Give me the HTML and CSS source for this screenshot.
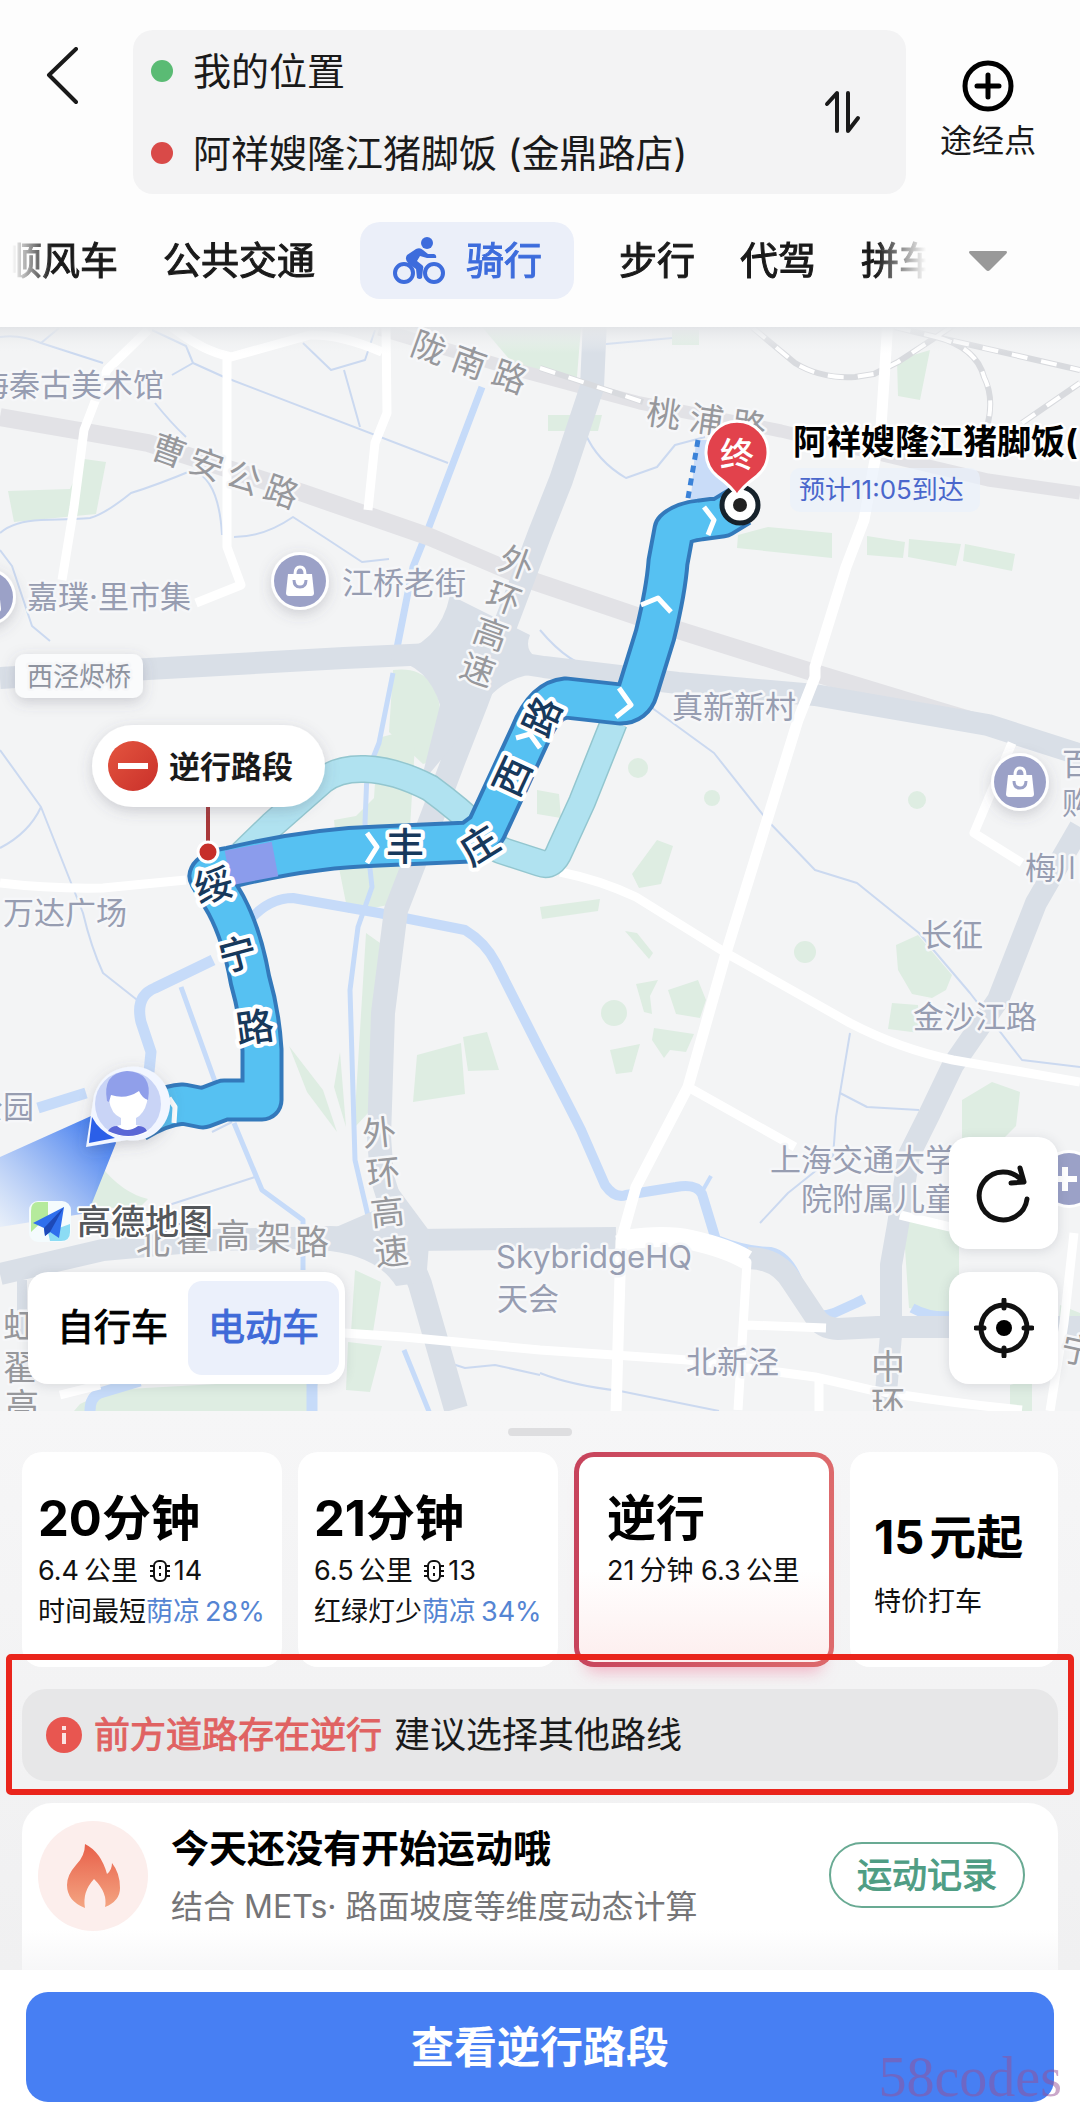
FILE: index.html
```
<!doctype html>
<html lang="zh-CN">
<head>
	<meta charset="utf-8">
	<title>骑行路线</title>
	<meta name="viewport" content="width=device-width, initial-scale=1">
	<link rel="stylesheet" href="styles.css">
</head>
<body>
	<header class="top">
		<div class="search">
			<button class="back" aria-label="返回">
				<svg width="32" height="58" viewBox="0 0 32 58"><path d="M30 2 3 28l27 27" /></svg>
			</button>
			<div class="places">
				<div class="place-list">
					<div class="place"><i class="dot green"></i>我的位置</div>
					<div class="place"><i class="dot red"></i>阿祥嫂隆江猪脚饭 (金鼎路店)</div>
				</div>
				<button class="swap" aria-label="交换起终点">
					<svg width="38" height="44" viewBox="0 0 38 44"><path d="M3 14 13 3v38M24 3v38l10-13" /></svg>
				</button>
			</div>
			<button class="via">
				<svg width="54" height="54" viewBox="0 0 54 54"><circle cx="27" cy="27" r="23" /><path d="M27 16v22M16 27h22" /></svg>
				途经点
			</button>
		</div>
		<div class="tabs">
			<nav class="tab-scroll">
				<a href="#">顺风车</a>
				<a href="#">公共交通</a>
				<a href="#" class="on">
					<svg class="bike" width="54" height="48" viewBox="0 0 54 48">
						<circle class="wheel" cx="12" cy="36" r="9" />
						<circle class="wheel" cx="42" cy="36" r="9" />
						<circle cx="35" cy="6" r="6" />
						<path d="M15 18 24 12q4-2 7 1l5 4h6q3 1 2 4h-9l-7-2-3 5 5 4q2 1 1 4l-1 9q-2 2-5 0l-1-9-7-5q-5-4-2-9z" />
					</svg>
					骑行
				</a>
				<a href="#">步行</a>
				<a href="#">代驾</a>
				<a href="#">拼车</a>
			</nav>
			<button class="more" aria-label="更多">
				<svg width="40" height="22" viewBox="0 0 40 22"><path d="M2 1h36q2 1 0 3L22 20q-2 2-4 0L2 4q-2-2 0-3z" /></svg>
			</button>
		</div>
	</header>

	<main>
		<section class="map">
			<svg class="map-art" viewBox="0 327 1080 1084">
				<defs>
					<linearGradient id="beam" x1="1" y1="0" x2="0" y2="1">
						<stop offset="0.1" stop-color="#3c78ee" />
						<stop offset="1" stop-color="#e3edfb" stop-opacity="0.7" />
					</linearGradient>
					<linearGradient id="noentry" x1="0" y1="0" x2="1" y2="1">
						<stop offset="0" stop-color="#e4553f" />
						<stop offset="1" stop-color="#c9302a" />
					</linearGradient>
					<linearGradient id="shade" x1="0" y1="0" x2="0" y2="1">
						<stop offset="0" stop-color="#e2e4e7" />
						<stop offset="1" stop-color="#f3f4f5" stop-opacity="0" />
					</linearGradient>
					<filter id="soft" x="-20%" y="-30%" width="140%" height="180%">
						<feDropShadow dx="0" dy="4" stdDeviation="7" flood-color="#556" flood-opacity="0.25" />
					</filter>
					<g id="bag">
						<circle r="29" fill="#fff" filter="url(#soft)" />
						<circle r="26" fill="#9ba1c7" />
						<path d="M-12-7h24l2 19q0 3-3 3h-22q-3 0-3-3z" fill="#fff" />
						<path d="M-5-7q0-7 5-7t5 7" fill="none" stroke="#fff" stroke-width="3" />
						<path d="M-6-1q0 7 6 7t6-7" fill="none" stroke="#9ba1c7" stroke-width="3" />
					</g>
				</defs>
				<rect y="327" width="1080" height="1084" fill="#f3f4f5" />

				<!-- parks -->
				<g class="park">
					<path d="M8 491l62-2 14-30 22 3-10 52-82 8z" />
					<path d="M393 670q46-6 48 50 0 40-18 44l-34-32z" />
					<path d="M482 327h99l-5 62-60-22z" />
					<path d="M672 330h27v15h-27zM548 415h54l-4 16h-50z" />
					<path d="M897 360l33-10-10 50-22-4zM738 535l30-8 64 6v25l-95-10zM867 536l38 6-2 16-36-3zM909 539l52 5-5 22-48-9zM965 544l50 10-3 17-49-10z" />
					<path d="M334 820l22-4 18-18 4-60 38-10-6 100-12 75-50 10-10-50zM366 933l14 10-12 170-14 15z" />
					<path d="M417 1055l44-12 4 51-52 8zM463 1037l24-5 12 38-31 1z" />
					<path d="M289 1046l34 44 14 42-30-40zM340 1052l6 75-12-40z" />
					<circle cx="638" cy="768" r="10" /><circle cx="712" cy="798" r="8" /><circle cx="917" cy="800" r="9" />
					<path d="M657 840l16 6-12 38-22 4-7-14zM625 931l12 2 16 20-4 6zM540 907l60-8-2 12-56 8z" />
					<circle cx="614" cy="1013" r="13" /><circle cx="805" cy="952" r="11" />
					<path d="M668 990l30-10 8 20-6 18-24-4zM636 984l22-4-8 16 2 18-8-2zM610 1050l30-6-8 28-16 2zM654 1028l40 6-8 18-16-2-6 8-12-18zM537 790l22 4 2 24-24-4z" />
					<path d="M896 945l22-10 34 40-6 15-14 8-20-4-14-24zM892 1003l26 2 2 28-32-4zM962 1100l30-18 28 10-4 34-18 18h-36z" />
					<path d="M903 1218l56 10v90l-50-10zM1010 1385l22-6v34h-22zM1060 1305l20 8v24l-22-4z" />
					<path d="M100 1165q22 28 48 34l-12 12-46-6zM355 1270l26 12-8 50h-22zM348 1342l34 4-12 46-24-2zM80 1404l30-14 210-12-12 33H74z" />
				</g>

				<!-- water -->
				<g class="brook">
					<path d="M0 337q20-3 41 6l62 20M59 328l-18 15M152 330l34 16 7 17 31 14 224 86M172 375l21-12M155 403q16 20 31 34M0 533q14-12 41-13 40-1 49-2 15-4 41-25 26-8 62-23 26 10 29 65M234 537q30 0 59-20l34 22 35 23 27-3M303 343l28 27 34-10 10-30M344 370l16 57M0 550l12 16 20 60 18 15" />
					<path d="M585 433q12 28 41 45l31-11 18-22 30-8M606 344l66-6M540 630q30 36 60 40l114 83 53 67 48 50 42 13 62 50 51 60 52 67 58 7" />
					<path d="M850 1033l-14 84-3 40-45 36-28 30M840 1093l27 14 52 3M0 750l41 57 42 106q8 34 20 60l38 30M41 807q-12 26-41 41M255 1177l-86 28M232 1122l-20 10M540 1373q30 12 80 18l99 20M440 1360l25 8 30-3 45 10" />
				</g>
				<g class="river">
					<path d="M482 387l-55 145-14 35-17 86" stroke-width="7" />
					<path d="M393 673l-14 70-12 30-2 50 7 64-14 40-8 63 5 170 14 60" stroke-width="5" />
					<path d="M181 987l36 100M234 1123l28 67 41 30v50M404 1350l26 64" stroke-width="5" />
					<path d="M248 922q20-24 45-24l86 15 86 17q20 12 31 33l44 87q26 50 41 80l24 55q10 14 21 10l50-8q20-4 26 7l14 46q30 12 55 12 24 6 34 53 6 16 29 8l22-10 8-4M912 1308q18 10 40 8" stroke-width="10" />
					<path d="M213 960l-58 28q-20 8-14 34l10 30-2 20M86 1093l-48 15M90 1411q0-14 10-18l40-12M312 1380v31" stroke-width="11" />
					<path d="M703 1190l8-14" stroke-width="4" />
				</g>

				<!-- arterial roads -->
				<g class="arterial">
					<path d="M379 329l120 36 141 38 141 28 207 49 92 13" stroke-width="13" />
					<path d="M0 417l86 15 62 11 155 50 127 44 106 45 142 48 137 43 125 38 140 42" stroke-width="18" />
				</g>
				<g class="ring">
					<path d="M595 320l-3 67-31 93-21 53-34 90-30 80-22 56-22 58-36 93-13 103-4 124 3 40 18 57 20 50 36 125" stroke-width="24" />
					<path d="M0 678l148-9 196-11 110-5 90 14 134 16 137 12 173 30 100 32" stroke-width="22" />
					<path d="M390 655q50-10 60-60l80 40q-10 24 30 30v10q-60-10-90 50l-50 60 20-80q-12-40-50-46z" class="junction" />
					<path d="M1080 827l-44 76-38 97-45 65-24 50-20 40-11 70-7 40v70l-7 80" stroke-width="22" />
					<path d="M0 1274l103-24 110-10 117-3 83 3 203-2M748 1258q30 0 44 24l24 36q6 10 22 11l40-2h220" stroke-width="22" />
					<path d="M320 1234l60-26 10-30 40 54-4 50-30 4q-20-32-76-36z" class="junction" />
					<path d="M22 1280v60" stroke-width="10" />
				</g>

				<!-- rail -->
				<path class="rail-bed" d="M753 328l42 35q26 16 60 14l19-3 24-12 38-25 24-16M895 327l41 10 144 33M936 337q40 10 48 40 10 20 4 46M1022 423l58-40M540 368l103 34" />
				<path class="rail" d="M753 328l42 35q26 16 60 14l19-3 24-12 38-25 24-16M895 327l41 10 144 33M936 337q40 10 48 40 10 20 4 46M1022 423l58-40M540 368l103 34" />

				<!-- streets -->
				<g class="street">
					<path d="M148 330l-41 40-23 60-10 77-12 73M172 327q30 24 59 30l79-22q30-1 72 17M227 357v190l14 38-45 18M386 327l1 86-12 30-7 67" />
					<path d="M888 320l-7 107-17 93-18 47-31 100v10l-17 43-72 233-38 134-52 100-15 54-5 173" stroke-width="11" />
					<path d="M560 872q40 8 76 25l90 56 124 70q50 26 103 37l127 22M688 1087l107 60M0 883q50 6 103 5l83-8M1012 743l-38 90 48 30" />
					<path d="M616 1240q50-8 70-2 40 8 61 24l-9 148M747 1325l79 3M344 1333l60 4 136 13 148 10 127 17 56 13q70 12 151 20M819 1380v31M1074 1233l-10 90-14 88M900 1215l50 12M60 1395l40-10" />
					<path d="M625 1240q40-6 66 0 36 8 56 20" stroke-width="20" />
				</g>
				<rect y="327" width="1080" height="26" fill="url(#shade)" />

				<!-- place labels -->
				<g class="label">
					<text x="-22" y="396">海秦古美术馆</text>
					<text x="27" y="608">嘉璞·里市集</text>
					<text x="342" y="594">江桥老街</text>
					<text x="672" y="718">真新新村</text>
					<text x="3" y="924">万达广场</text>
					<text x="-28" y="1118">公园</text>
					<text x="921" y="946">长征</text>
					<text x="913" y="1028">金沙江路</text>
					<text x="1025" y="879">梅川路</text>
					<text x="1062" y="775">百联</text>
					<text x="1062" y="814">购物</text>
					<text x="770" y="1171">上海交通大学</text>
					<text x="801" y="1210">院附属儿童</text>
					<text x="496" y="1268">SkybridgeHQ</text>
					<text x="497" y="1310">天会</text>
					<text x="686" y="1373">北新泾</text>
				</g>
				<rect x="15" y="654" width="128" height="44" rx="10" fill="#fafbfc" filter="url(#soft)" />
				<text x="27" y="686" class="bridge">西泾烬桥</text>
				<g class="road-name">
					<text transform="translate(429 347) rotate(20)" x="0 43 86" y="13">陇南路</text>
					<text transform="translate(169 450) rotate(20)" x="0 40 80 120" y="13">曹安公路</text>
					<text transform="translate(664 413) rotate(8)" x="0 43 86" y="13">桃浦路</text>
					<text transform="translate(517 562) rotate(20)" x="0 0 0 0" y="13 51 89 127">外环高速</text>
					<text transform="translate(379 1132) rotate(-6)" x="0 0 0 0" y="13 53 93 133">外环高速</text>
					<text x="153 193 233 274 312" y="1254 1251 1248 1250 1254">北翟高架路</text>
					<text x="888 888" y="1379 1416">中环</text>
					<text x="20 20 22" y="1338 1380 1418">虹翟高</text>
					<text transform="translate(1078 1350) rotate(12)" y="13">宁</text>
				</g>
				<use href="#bag" x="300" y="581" />
				<use href="#bag" x="1020" y="782" />
				<use href="#bag" x="-13" y="597" />
				<circle cx="1069" cy="1179" r="29" fill="#fff" />
				<circle cx="1069" cy="1179" r="26" fill="#9ba1c7" />
				<path d="M1065 1167v24M1055 1179h22" stroke="#fff" stroke-width="6" />

				<!-- other route, then the selected one -->
				<path class="alt-edge" d="M242 854L272 825 322 781Q338 768 365 769 Q395 770 430 788Q460 810 480 830L500 850 540 863Q553 868 560 850L582 802 614 722" />
				<path class="alt" d="M242 854L272 825 322 781Q338 768 365 769 Q395 770 430 788Q460 810 480 830L500 850 540 863Q553 868 560 850L582 802 614 722" />
				<path d="M696 440l30 0 14 50-50 18z" fill="#c9dcf8" />
				<path class="route-edge" d="M135 1122Q160 1106 183 1104L203 1108 224 1100H262V1050Q260 1015 250 980 242 935 226 905L209 876Q212 870 231 867 310 848 379 846L470 842 486 830 530 735Q544 700 566 698L620 704Q634 704 638 690L655 635Q666 590 668 562L674 530Q682 522 700 520L722 517 740 506" />
				<path class="route" d="M135 1122Q160 1106 183 1104L203 1108 224 1100H262V1050Q260 1015 250 980 242 935 226 905L209 876Q212 870 231 867 310 848 379 846L470 842 486 830 530 735Q544 700 566 698L620 704Q634 704 638 690L655 635Q666 590 668 562L674 530Q682 522 700 520L722 517 740 506" />
				<path d="M228 868l47-9" stroke="#8b9cec" stroke-width="35" />
				<path d="M698 440l-11 64" stroke="#3a82d8" stroke-width="5" stroke-dasharray="7 6" />
				<path class="arrows" d="M704 507l10 13-6 15M641 605l17-7 13 14M619 688l12 17-15 12M367 833l10 14-10 16M516 738l14-4 10 14M169 1098l6 9-1 16" />
				<g class="route-name">
					<text transform="translate(214 886) rotate(-15)" y="13">绥</text>
					<text transform="translate(238 955) rotate(-15)" y="13">宁</text>
					<text transform="translate(255 1028) rotate(-8)" y="13">路</text>
					<text transform="translate(405 847)" y="13">丰</text>
					<text transform="translate(480 846) rotate(-32)" y="13">庄</text>
					<text transform="translate(513 777) rotate(-65)" y="13">西</text>
					<text transform="translate(543 717) rotate(-65)" y="13">路</text>
				</g>

				<!-- destination -->
				<circle cx="740" cy="505" r="18" fill="#fff" stroke="#16222b" stroke-width="5" />
				<circle cx="740" cy="505" r="7" fill="#222" />
				<path d="M737 496q-4-8-20-20a31 31 0 1 1 40 0q-16 12-20 20z" fill="#e2424c" stroke="#fff" stroke-width="3" />
				<text x="737" y="467" class="pin-text">终</text>
				<text x="793" y="454" class="dest">阿祥嫂隆江猪脚饭(</text>
				<rect x="790" y="468" width="190" height="44" rx="10" fill="#e9f1fb" opacity="0.7" />
				<text x="799" y="499" class="eta">预计11:05到达</text>

				<!-- current position -->
				<path d="M100 1112 0 1157v70l88-14 28-70z" fill="url(#beam)" />
				<path d="M127 1067a37 37 0 1 1 0 73l-41 7 8-52q8-24 33-28z" fill="#f2f6ff" filter="url(#soft)" />
				<path d="M92 1117l-3 26 26-5q-16-7-23-21z" fill="#2b5fe8" />
				<circle cx="128" cy="1104" r="33" fill="#c9d4f6" />
				<path d="M109 1132q4-6 12-7v-7q-10-4-12-18-6-22 19-25 24 3 19 27-3 12-11 16v7q9 1 12 7-20 10-39 0z" fill="#fff" />
				<path d="M107 1101q-5-28 20-30 26 1 21 29-6-2-9-9-13 9-28 4l-2 7z" fill="#909fea" />
				<path d="M108 1131q3-5 9-5 10 8 21 0 7 0 9 5-18 10-39 0z" fill="#5a67d6" />

				<!-- wrong way callout -->
				<path d="M208 807v38" stroke="#a8383a" stroke-width="4" />
				<circle cx="208" cy="852" r="10" fill="#c62f2a" stroke="#fff" stroke-width="3" />
				<rect x="92" y="725" width="233" height="82" rx="41" fill="#fff" filter="url(#soft)" />
				<circle cx="133" cy="766" r="25" fill="url(#noentry)" />
				<path d="M118 766h30" stroke="#fff" stroke-width="6" />
				<text x="169" y="778" class="callout">逆行路段</text>

				<!-- brand -->
				<rect x="29" y="1201" width="42" height="41" rx="9" fill="#f4fbfd" />
				<path d="M38 1202h10v14l-17 16v-21q0-9 7-9z" fill="#b5ea9c" />
				<path d="M48 1232l22-8v8q0 9-9 9H50z" fill="#8cdcf4" />
				<path d="M33 1223l31-16-5 31-9-6-5 4-1-8z" fill="#2f6fed" />
				<path d="M64 1207l-20 21 1 8 5-4z" fill="#1d49b8" />
				<text x="77" y="1234" class="brand">高德地图</text>
			</svg>
			<div class="map-bar">
				<div class="ride-type">
					<button>自行车</button>
					<button class="on">电动车</button>
				</div>
				<div class="map-tools">
					<button aria-label="刷新">
						<svg width="60" height="60" viewBox="0 0 60 60"><path d="M53 36a24 24 0 1 1-5-18M46 5l4 14-13 1" /></svg>
					</button>
					<button aria-label="定位">
						<svg width="60" height="60" viewBox="0 0 60 60"><circle cx="30" cy="30" r="23" /><circle class="fill" cx="30" cy="30" r="8" /><path d="M30 2v8M30 50v8M2 30h8M50 30h8" /></svg>
					</button>
				</div>
			</div>
		</section>

		<section class="sheet">
			<div class="handle"></div>
			<div class="routes">
				<button class="route-card">
					<b>20分钟</b>
					<span>6.4<i class="thin"></i>公里 <svg class="light" width="22" height="24" viewBox="0 0 22 24"><rect x="5" y="2" width="12" height="20" rx="5" /><path d="M1 7h4M1 12h4M1 17h4M17 7h4M17 12h4M17 17h4M11 7v3M11 14v3" /></svg>14</span>
					<span>时间最短<em>荫凉<i class="thin"></i>28%</em></span>
				</button>
				<button class="route-card">
					<b>21分钟</b>
					<span>6.5<i class="thin"></i>公里 <svg class="light" width="22" height="24" viewBox="0 0 22 24"><rect x="5" y="2" width="12" height="20" rx="5" /><path d="M1 7h4M1 12h4M1 17h4M17 7h4M17 12h4M17 17h4M11 7v3M11 14v3" /></svg>13</span>
					<span>红绿灯少<em>荫凉<i class="thin"></i>34%</em></span>
				</button>
				<button class="route-card picked">
					<b>逆行</b>
					<span>21<i class="thin"></i>分钟 6.3<i class="thin"></i>公里</span>
				</button>
				<button class="route-card taxi">
					<b>15<i class="thin"></i>元起</b>
					<span>特价打车</span>
				</button>
			</div>

			<div class="notice">
				<svg width="36" height="36" viewBox="0 0 36 36"><circle cx="18" cy="18" r="18" fill="#e85650" /><path d="M18 9v4M18 16v11" fill="none" stroke="#fbe3e2" stroke-width="4" /></svg>
				<strong>前方道路存在逆行</strong>
				<span>建议选择其他路线</span>
			</div>

			<div class="sport">
				<div class="flame">
					<svg width="56" height="66" viewBox="0 0 56 66">
						<defs><linearGradient id="fire" x1="0" y1="0" x2="0" y2="1"><stop offset="0" stop-color="#e8604a" /><stop offset="1" stop-color="#f4a582" /></linearGradient></defs>
						<path d="M20 1q16 8 22 30 5-4 5-11 8 10 8 25 0 13-15 19 3-14-11-28-12 13-9 29Q2 58 2 42q0-10 9-20 9-9 9-21z" fill="url(#fire)" />
					</svg>
				</div>
				<div class="sport-text">
					<h2>今天还没有开始运动哦</h2>
					<p>结合 METs· 路面坡度等维度动态计算</p>
				</div>
				<button class="record">运动记录</button>
			</div>
		</section>
	</main>

	<footer class="bottom">
		<button class="primary">查看逆行路段</button>
		<span class="mark">58codes</span>
	</footer>
</body>
</html>
```

FILE: styles.css
```
* {
	box-sizing: border-box;
}

body {
	margin: 0;
	background: #fff;
	color: #1a1a1a;
	font-family: Inter, "Noto Sans CJK SC", sans-serif;
}

button {
	margin: 0;
	padding: 0;
	border: 0;
	background: none;
	color: inherit;
	font: inherit;
	cursor: pointer;
}

a {
	color: inherit;
	text-decoration: none;
}

svg {
	display: block;
}

/* header */
.top {
	padding: 30px 0 28px;
	background: #fdfdfd;
}

.search {
	display: flex;
	align-items: center;
	padding: 0 44px 0 46px;
}

.back {
	margin-bottom: 72px;
}

.back path, .swap path, .via path, .via circle {
	fill: none;
	stroke: #1a1a1a;
	stroke-width: 4;
	stroke-linecap: round;
	stroke-linejoin: round;
}

.places {
	flex: 1;
	display: flex;
	align-items: center;
	justify-content: space-between;
	margin: 0 34px 0 55px;
	padding: 0 44px 0 18px;
	border-radius: 20px;
	background: #f3f3f4;
}

.place {
	display: flex;
	align-items: center;
	gap: 20px;
	height: 82px;
	font-size: 38px;
	line-height: 48px;
}

.dot {
	width: 22px;
	height: 22px;
	border-radius: 50%;
}

.green {
	background: #5abb74;
}

.red {
	background: #d94a48;
}

.via {
	display: flex;
	flex-direction: column;
	align-items: center;
	gap: 8px;
	margin-bottom: 4px;
	font-size: 32px;
	line-height: 40px;
}

.via circle, .via path {
	stroke: #000;
	stroke-width: 5;
}

.tabs {
	display: flex;
	align-items: center;
	margin-top: 28px;
	padding: 0 72px 0 12px;
}

.tab-scroll {
	flex: 1;
	display: flex;
	align-items: center;
	gap: 45px;
	overflow: hidden;
	font-size: 38px;
	line-height: 77px;
	white-space: nowrap;
	-webkit-text-stroke: 1px;
	-webkit-mask-image: linear-gradient(90deg, transparent, #000 40px, #000 calc(100% - 50px), transparent);
	mask-image: linear-gradient(90deg, transparent, #000 40px, #000 calc(100% - 50px), transparent);
}

.tab-scroll a:first-child {
	margin-left: -8px;
}

.tab-scroll .on {
	display: flex;
	align-items: center;
	gap: 20px;
	padding: 0 32px;
	border-radius: 20px;
	background: #ebeff9;
	color: #3d6cdc;
}

.bike {
	fill: #3d6cdc;
}

.bike .wheel {
	fill: none;
	stroke: #3d6cdc;
	stroke-width: 4;
}

.more {
	margin-left: 42px;
}

.more path {
	fill: #999;
}

/* map */
.map {
	position: relative;
	overflow: hidden;
	background: #f3f4f5;
}

.map-art {
	width: 100%;
	height: auto;
}

.park {
	fill: #deede2;
}

.brook, .river, .arterial, .ring, .street, .rail, .rail-bed {
	fill: none;
	stroke-linejoin: round;
}

.brook {
	stroke: #cbd9f0;
	stroke-width: 2;
}

.river {
	stroke: #c6dbf9;
}

.arterial {
	stroke: #e2e2e6;
}

.ring {
	stroke: #d9dfe7;
}

.junction {
	fill: #d9dfe7;
	stroke: none;
}

.street {
	stroke: #fff;
	stroke-width: 9;
}

.rail-bed {
	stroke: #d8dade;
	stroke-width: 6;
}

.rail {
	stroke: #fff;
	stroke-width: 4;
	stroke-dasharray: 16 14;
}

.map-art text {
	paint-order: stroke;
	stroke: #f6f7f9;
	stroke-width: 5px;
	stroke-linejoin: round;
}

.label {
	fill: #979db1;
	font-size: 31px;
}

.bridge {
	fill: #8e939f;
	font-size: 26px;
}

.road-name {
	fill: #97989c;
	font-size: 34px;
	text-anchor: middle;
}

.alt-edge, .alt, .route-edge, .route, .arrows {
	fill: none;
	stroke-linejoin: round;
	stroke-linecap: butt;
}

.alt-edge {
	stroke: #93c6cf;
	stroke-width: 28;
}

.alt {
	stroke: #b0e2f0;
	stroke-width: 25;
}

.route-edge {
	stroke: #3379bb;
	stroke-width: 43;
}

.route {
	stroke: #56c1f2;
	stroke-width: 35;
}

.arrows {
	stroke: #fff;
	stroke-width: 5;
}

.route-name {
	fill: #17395c;
	font-size: 38px;
	font-weight: 500;
	text-anchor: middle;
}

.map-art .route-name text {
	stroke: #fff;
	stroke-width: 8px;
}

.map-art .pin-text {
	fill: #fff;
	stroke: none;
	font-size: 34px;
	font-weight: 500;
	text-anchor: middle;
}

.map-art .dest {
	fill: #000;
	stroke: #fff;
	font-size: 34px;
	font-weight: 700;
}

.map-art .eta {
	fill: #4a67cc;
	stroke: none;
	font-size: 26px;
}

.map-art .callout {
	fill: #1a1a1a;
	stroke: none;
	font-size: 31px;
	font-weight: 700;
}

.map-art .brand {
	fill: #55585c;
	stroke: #fff;
	stroke-width: 4px;
	font-size: 34px;
	font-weight: 500;
}

.map-bar {
	position: absolute;
	right: 22px;
	bottom: 27px;
	left: 28px;
	display: flex;
	align-items: flex-end;
	justify-content: space-between;
}

.ride-type {
	display: flex;
	padding: 9px 6px 9px 9px;
	border-radius: 20px;
	background: #fff;
	box-shadow: 0 2px 12px rgba(60, 70, 90, 0.15);
	color: #000;
	font-size: 37px;
	line-height: 94px;
	-webkit-text-stroke: 1px;
}

.ride-type button {
	width: 151px;
	border-radius: 14px;
}

.ride-type .on {
	background: #ebf0fb;
	color: #3f6ad8;
}

.map-tools {
	display: grid;
	gap: 23px;
}

.map-tools button {
	display: grid;
	place-items: center;
	width: 109px;
	height: 112px;
	border-radius: 20px;
	background: #fff;
	box-shadow: 0 2px 12px rgba(60, 70, 90, 0.15);
}

.map-tools svg {
	fill: none;
	stroke: #111;
	stroke-width: 5;
	stroke-linecap: round;
	stroke-linejoin: round;
}

.map-tools .fill {
	fill: #000;
	stroke: none;
}

/* bottom sheet */
.sheet {
	padding: 17px 22px 0;
	background: linear-gradient(#f6f6f7, #f0f0f1);
}

.handle {
	width: 64px;
	height: 8px;
	margin: 0 auto 16px;
	border-radius: 4px;
	background: #dedee0;
}

.routes {
	display: grid;
	grid-template-columns: 5fr 5fr 5fr 4fr;
	gap: 16px;
}

.route-card {
	display: flex;
	flex-direction: column;
	align-items: flex-start;
	height: 215px;
	padding: 36px 0 0 16px;
	border-radius: 20px;
	background: #fff;
	color: #111;
	font-size: 27px;
	line-height: 41px;
	text-align: left;
	white-space: nowrap;
}

.route-card b {
	color: #000;
	font-size: 49px;
	line-height: 62px;
}

.route-card em {
	color: #5585d3;
	font-style: normal;
}

.thin {
	display: inline-block;
	width: 5px;
}

.light {
	display: inline-block;
	margin: 0 3px;
	vertical-align: -3px;
	fill: none;
	stroke: #111;
	stroke-width: 2;
}

.picked {
	padding: 31px 0 0 28px;
	border: 5px solid transparent;
	background: linear-gradient(#fff 55%, #fdeeee) padding-box, linear-gradient(90deg, #c7435c, #dd6a6c) border-box;
	box-shadow: 0 16px 16px -12px rgba(240, 130, 160, 0.6);
}

.taxi {
	padding: 54px 0 0 24px;
	gap: 13px;
}

.taxi b {
	font-size: 47px;
}

.notice {
	position: relative;
	display: flex;
	align-items: center;
	gap: 12px;
	margin-top: 22px;
	padding: 0 24px;
	border-radius: 24px;
	background: #e7e7e8;
	color: #1a1a1a;
	font-size: 36px;
	line-height: 92px;
}

.notice strong {
	color: #e06262;
	font-weight: 400;
	-webkit-text-stroke: 1px;
}

/* highlight frame around the notice */
.notice::after {
	content: "";
	position: absolute;
	inset: -35px -16px -14px;
	border: 6px solid #ea251c;
	border-radius: 5px;
}

.sport {
	display: flex;
	align-items: flex-start;
	margin-top: 22px;
	padding: 18px 33px 37px 16px;
	border-radius: 30px 30px 0 0;
	background: linear-gradient(#fff 75%, #f7f7f8);
}

.flame {
	display: grid;
	place-items: center;
	width: 110px;
	height: 110px;
	border-radius: 50%;
	background: #fceeec;
}

.sport-text {
	flex: 1;
	margin-left: 23px;
}

.sport-text h2 {
	margin: 0;
	color: #000;
	font-size: 38px;
	line-height: 54px;
}

.sport-text p {
	margin: 6px 0 0;
	color: #757577;
	font-size: 32px;
	line-height: 52px;
}

.record {
	margin-top: 21px;
	padding: 0 26px;
	border: 2px solid #69aa93;
	border-radius: 33px;
	color: #4f9d84;
	font-size: 35px;
	line-height: 62px;
	-webkit-text-stroke: 1px;
}

.bottom {
	position: relative;
	padding: 22px 26px 5px;
	background: #fff;
}

.primary {
	width: 100%;
	border-radius: 22px;
	background: #477ff3;
	color: #fff;
	font-size: 43px;
	font-weight: 700;
	line-height: 110px;
}

.mark {
	position: absolute;
	right: 18px;
	bottom: 0;
	color: rgba(150, 80, 150, 0.5);
	font: 56px/60px "Liberation Serif", serif;
}
```
